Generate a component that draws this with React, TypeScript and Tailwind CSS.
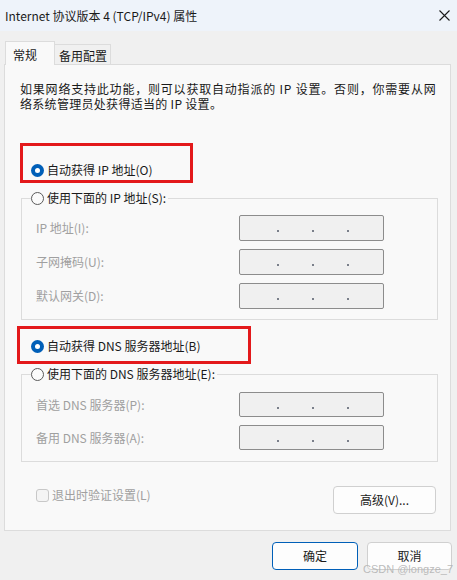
import React from "react";

const Radio = ({ checked }: { checked?: boolean }) =>
  checked ? (
    <span className="w-[13px] h-[13px] rounded-full bg-[#005fb8] flex items-center justify-center shrink-0">
      <span className="w-[5px] h-[5px] rounded-full bg-white" />
    </span>
  ) : (
    <span className="w-[13px] h-[13px] rounded-full border border-[#5a5a5a] bg-[#fbfbfb] shrink-0" />
  );

const RadioRow = ({ checked, label }: { checked?: boolean; label: string }) => (
  <div className="flex items-center gap-[3px] h-[14px] text-[12px] leading-[14px] text-[#1a1a1a] whitespace-nowrap">
    <Radio checked={checked} />
    <span>{label}</span>
  </div>
);

const IpBox = ({ h }: { h: string }) => (
  <div
    className={
      "w-[145px] rounded-[2px] border border-[#8c8c8c] bg-[#f0f0f0] flex items-center pl-[37px] gap-[33px] pt-[6px] " +
      h
    }
  >
    <span className="w-[2px] h-[2px] bg-[#7a7f8a]" />
    <span className="w-[2px] h-[2px] bg-[#7a7f8a]" />
    <span className="w-[2px] h-[2px] bg-[#7a7f8a]" />
  </div>
);

const FieldRow = ({ label, h }: { label: string; h: string }) => (
  <div className="flex items-center pl-[14px]">
    <span className="w-[203px] text-[12px] leading-[14px] text-[#a0a0a0] whitespace-nowrap">{label}</span>
    <IpBox h={h} />
  </div>
);

export default function App() {
  return (
    <div className="relative w-[457px] h-[580px] bg-[#f0f0f0] overflow-hidden font-['Noto_Sans_CJK_SC','Noto_Sans',sans-serif] text-[#1a1a1a]">
      {/* title bar */}
      <div className="h-[31px] bg-[#eef3fa] flex items-center justify-between pl-[5px] pr-[7px]">
        <span className="text-[12px] leading-[14px] text-[#1a1a1a]">Internet 协议版本 4 (TCP/IPv4) 属性</span>
        <svg width="11" height="11" viewBox="0 0 11 11">
          <path d="M0.5 0.5 L10.5 10.5 M10.5 0.5 L0.5 10.5" stroke="#1a1a1a" strokeWidth="1.1" />
        </svg>
      </div>

      {/* tabs */}
      <div className="mt-[10px] ml-[5px] flex items-end h-[24px] -mb-[1px] relative z-10">
        <div className="w-[50px] h-[24px] bg-[#f9f9f9] border-l border-t border-r border-[#dcdcdc] pl-[7px] pt-[3px] text-[12px] leading-[14px] pb-[1px] flex items-center">
          常规
        </div>
        <div className="w-[56px] h-[21px] border-t border-r border-b border-[#dcdcdc] bg-[#f0f0f0] pl-[4px] flex items-center text-[12px] leading-[14px] pt-[3px]">
          备用配置
        </div>
      </div>

      {/* panel */}
      <div className="ml-[4px] w-[447px] h-[467px] border border-[#dcdcdc] bg-[#f9f9f9] flex flex-col">
        <div className="mt-[16px] ml-[15px] text-[12px] leading-[15px] text-[#1a1a1a] whitespace-nowrap">
          <div className="h-[15px] tracking-[0.8px]">如果网络支持此功能，则可以获取自动指派的 IP 设置。否则，你需要从网</div>
          <div className="h-[15px] tracking-[0.3px]">络系统管理员处获得适当的 IP 设置。</div>
        </div>

        <div className="mt-[32px] ml-[15px] w-[173px] h-[40px] border-[3px] border-[#e3191b] flex items-end pl-[8px] pb-[3px]">
          <RadioRow checked label="自动获得 IP 地址(O)" />
        </div>

        <fieldset className="mt-[8px] ml-[16px] w-[417px] border border-[#dcdcdc]">
          <legend className="ml-[9px] pr-[2px] text-[12px] leading-[14px] h-[14px]">
            <RadioRow label="使用下面的 IP 地址(S):" />
          </legend>
          <div className="flex flex-col gap-[8px] pt-[10px] pb-[10px]">
            <FieldRow label="IP 地址(I):" h="h-[26px]" />
            <FieldRow label="子网掩码(U):" h="h-[26px]" />
            <FieldRow label="默认网关(D):" h="h-[26px]" />
          </div>
        </fieldset>

        <div className="mt-[6px] ml-[12px] w-[234px] h-[38px] border-[3px] border-[#e3191b] flex items-start pl-[11px] pt-[10px]">
          <RadioRow checked label="自动获得 DNS 服务器地址(B)" />
        </div>

        <fieldset className="mt-[3px] ml-[16px] w-[417px] border border-[#dcdcdc]">
          <legend className="ml-[9px] pr-[2px] text-[12px] leading-[14px] h-[14px]">
            <RadioRow label="使用下面的 DNS 服务器地址(E):" />
          </legend>
          <div className="flex flex-col gap-[8px] pt-[11px] pb-[11px]">
            <FieldRow label="首选 DNS 服务器(P):" h="h-[25px]" />
            <FieldRow label="备用 DNS 服务器(A):" h="h-[25px]" />
          </div>
        </fieldset>

        <div className="mt-[24px] flex items-start justify-between pl-[31px] pr-[14px]">
          <div className="mt-[2px] flex items-center gap-[3px]">
            <span className="w-[13px] h-[13px] rounded-[3px] border border-[#c8c8c8] bg-[#f4f4f4]" />
            <span className="text-[12px] leading-[14px] text-[#a0a0a0]">退出时验证设置(L)</span>
          </div>
          <button className="w-[103px] h-[28px] rounded-[4px] border border-[#d0d0d0] bg-[#fdfdfd] text-[12px] leading-[14px] text-[#1a1a1a]">
            高级(V)...
          </button>
        </div>
      </div>

      {/* dialog buttons */}
      <div className="mt-[11px] flex justify-end gap-[9px] pr-[5px]">
        <button className="w-[86px] h-[28px] rounded-[4px] border border-[#005fb8] bg-[#fdfdfd] text-[12px] leading-[14px] text-[#1a1a1a]">
          确定
        </button>
        <button className="w-[85px] h-[28px] rounded-[4px] border border-[#d0d0d0] bg-[#fdfdfd] text-[12px] leading-[14px] text-[#1a1a1a]">
          取消
        </button>
      </div>

      <span className="absolute right-[4px] bottom-[5px] text-[11px] leading-[12px] text-[#b4b4b4]/90 font-['Liberation_Sans',sans-serif]">
        CSDN @longze_7
      </span>
    </div>
  );
}
